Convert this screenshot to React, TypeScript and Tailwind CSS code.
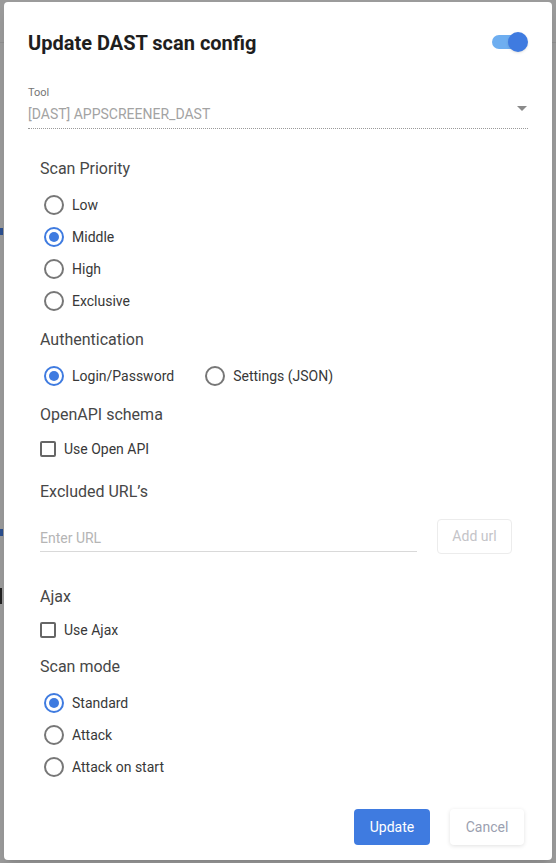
import { useState } from 'react'

const priorities = ['Low', 'Middle', 'High', 'Exclusive']
const modes = ['Standard', 'Attack', 'Attack on start']

function Radio({ label, checked, onClick }: { label: string; checked: boolean; onClick?: () => void }) {
  return (
    <button type="button" onClick={onClick} className="flex items-center h-8 text-left">
      <span
        className={`w-5 h-5 ml-1 rounded-full border-2 flex items-center justify-center ${
          checked ? 'border-[#3f7be0]' : 'border-[#777777]'
        }`}
      >
        {checked && <span className="w-[10px] h-[10px] rounded-full bg-[#3f7be0]" />}
      </span>
      <span className="ml-2 text-[14px] text-[#383838]">{label}</span>
    </button>
  )
}

function Checkbox({ label }: { label: string }) {
  return (
    <label className="flex items-center h-8">
      <span className="w-4 h-4 rounded-[2px] border-2 border-[#666666]" />
      <span className="ml-2 text-[14px] text-[#383838]">{label}</span>
    </label>
  )
}

function SectionTitle({ children, className = '' }: { children: string; className?: string }) {
  return <h3 className={`text-[16px] leading-6 text-[#474747] ${className}`}>{children}</h3>
}

export default function App() {
  const [priority, setPriority] = useState('Middle')
  const [auth, setAuth] = useState('login')
  const [mode, setMode] = useState('Standard')

  return (
    <div
      className="relative w-[556px] h-[863px] bg-[#9b9b9b] overflow-hidden"
      style={{ fontFamily: 'Roboto, "Liberation Sans", sans-serif' }}
    >
      {/* page behind the overlay */}
      <div className="h-[43px] border-b border-[#8f8f8f]" />
      <div className="h-[185px]" />
      <div className="w-[3px] h-[7px] bg-[#2b4f8f]" />
      <div className="h-[294px]" />
      <div className="w-[3px] h-[7px] bg-[#2b4f8f]" />
      <div className="h-[52px]" />
      <div className="w-[2px] h-[16px] bg-[#222222]" />

      {/* modal */}
      <div className="absolute left-[4px] top-[2px] w-[548px] h-[858px] bg-white rounded-[4px] shadow-lg flex flex-col">
        <div className="flex items-center justify-between pt-6 pl-6 pr-[26px] h-[56px]">
          <h2 className="text-[20px] font-bold text-[#1e1e1e] leading-8 mt-[1px]">Update DAST scan config</h2>
          <div className="relative w-[34px] h-[14px] rounded-full bg-[#6eaef0]">
            <span className="absolute -right-[2px] -top-[3px] w-5 h-5 rounded-full bg-[#3f7be0] shadow" />
          </div>
        </div>

        <div className="mx-6 mt-[28px]">
          <div className="text-[11px] leading-[14px] text-[#757575]">Tool</div>
          <div className="flex items-center justify-between h-5 mt-1">
            <span className="text-[14px] text-[#a3a3a3]">[DAST] APPSCREENER_DAST</span>
            <svg width="10" height="5" viewBox="0 0 10 5" className="mr-[1px] -mt-3">
              <path d="M0 0h10L5 5z" fill="#8a8a8a" />
            </svg>
          </div>
          <div className="mt-[4px] border-b border-dotted border-[#9a9a9a]" />
        </div>

        <div className="px-9 flex flex-col">
          <SectionTitle className="mt-[28px]">Scan Priority</SectionTitle>
          <div className="mt-2 flex flex-col">
            {priorities.map(p => (
              <Radio key={p} label={p} checked={priority === p} onClick={() => setPriority(p)} />
            ))}
          </div>

          <SectionTitle className="mt-[11px]">Authentication</SectionTitle>
          <div className="mt-2 flex items-center">
            <Radio label="Login/Password" checked={auth === 'login'} onClick={() => setAuth('login')} />
            <div className="ml-[27px]">
              <Radio label="Settings (JSON)" checked={auth === 'json'} onClick={() => setAuth('json')} />
            </div>
          </div>

          <SectionTitle className="mt-[11px]">OpenAPI schema</SectionTitle>
          <div className="mt-[6px]">
            <Checkbox label="Use Open API" />
          </div>

          <SectionTitle className="mt-[15px]">Excluded URL’s</SectionTitle>
          <div className="mt-[15px] flex items-start">
            <div className="w-[377px] h-[33px] border-b border-[#d9d9d9] flex items-center pt-[6px]">
              <span className="text-[14px] text-[#b5b5b5]">Enter URL</span>
            </div>
            <button
              type="button"
              className="ml-5 w-[75px] h-[35px] rounded-[4px] border border-[#ececec] text-[14px] text-[#c4c4c8]"
            >
              Add url
            </button>
          </div>

          <SectionTitle className="mt-[31px]">Ajax</SectionTitle>
          <div className="mt-[5px]">
            <Checkbox label="Use Ajax" />
          </div>

          <SectionTitle className="mt-[9px]">Scan mode</SectionTitle>
          <div className="mt-2 flex flex-col">
            {modes.map(m => (
              <Radio key={m} label={m} checked={mode === m} onClick={() => setMode(m)} />
            ))}
          </div>
        </div>

        <div className="mt-[26px] flex justify-end gap-5 pr-7">
          <button type="button" className="w-[76px] h-9 rounded-[4px] bg-[#3f7be0] text-white text-[14px]">
            Update
          </button>
          <button
            type="button"
            className="w-[74px] h-9 rounded-[4px] bg-white text-[#9b9fb0] text-[14px] shadow-[0_1px_4px_rgba(0,0,0,0.12)]"
          >
            Cancel
          </button>
        </div>
      </div>
    </div>
  )
}
